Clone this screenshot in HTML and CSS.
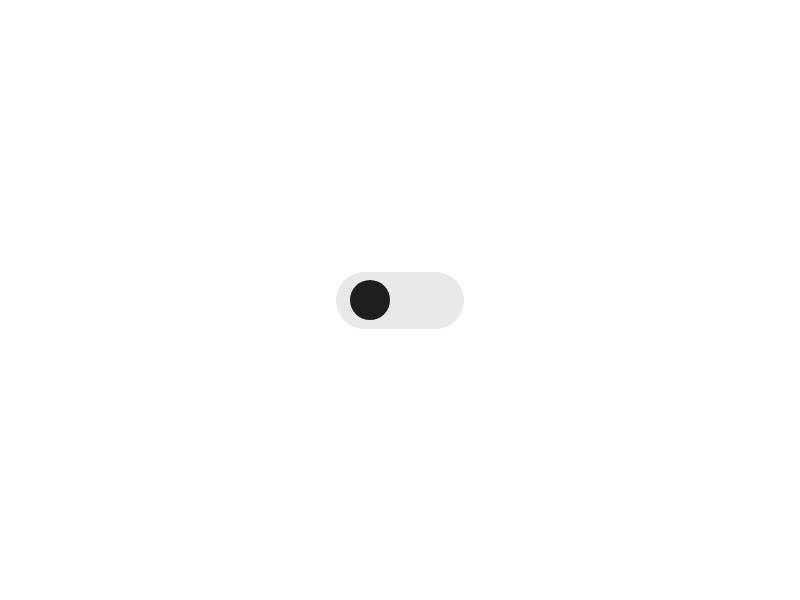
FILE: index.html
```html
<!DOCTYPE html>
<html>
<head>
<meta charset="utf-8">
<link rel="stylesheet" href="styles.css">
</head>
<body>
<main class="stage">
  <div class="toggle" role="switch" aria-checked="false">
    <span class="knob"></span>
  </div>
</main>
</body>
</html>
```

FILE: styles.css
```css
html, body {
  margin: 0;
  padding: 0;
  background: #ffffff;
  font-family: "Liberation Sans", sans-serif;
}
.stage {
  width: 800px;
  height: 600px;
  display: flex;
  align-items: center;
  justify-content: center;
}
.toggle {
  width: 128px;
  height: 57px;
  box-sizing: border-box;
  border-radius: 28.5px;
  background: #e9e9e9;
  display: flex;
  align-items: center;
  padding-left: 14px;
}
.knob {
  width: 40px;
  height: 40px;
  border-radius: 50%;
  background: #1e1e1e;
}
```
